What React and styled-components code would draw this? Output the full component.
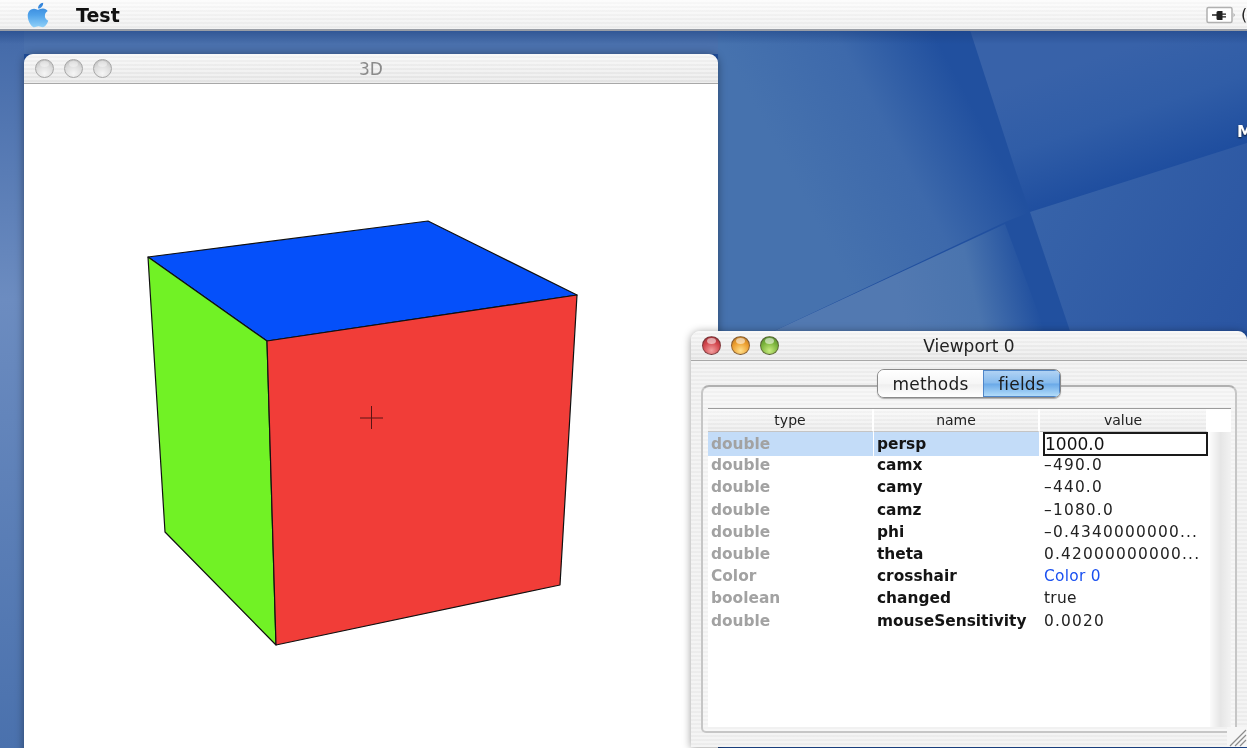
import React from 'react';
import styled, { createGlobalStyle } from 'styled-components';

const GlobalStyle = createGlobalStyle`
  html, body {
    margin: 0;
    padding: 0;
    overflow: hidden;
    background: #2a57a3;
  }
`;

const stripes = `repeating-linear-gradient(180deg, rgba(255,255,255,0.4) 0 2px, rgba(232,232,232,0.12) 2px 4px)`;

const Desktop = styled.div`
  position: relative;
  width: 1247px;
  height: 748px;
  overflow: hidden;
  font-family: "DejaVu Sans", "Liberation Sans", sans-serif;
  filter: blur(0.5px);
`;

const Wallpaper = styled.svg`
  position: absolute;
  inset: 0;
  width: 1247px;
  height: 748px;
`;

const MenuBar = styled.header`
  position: relative;
  z-index: 3;
  height: 29px;
  display: flex;
  align-items: center;
  padding-left: 26px;
  background: ${stripes}, linear-gradient(180deg, #fafafa, #ebebeb);
  border-bottom: 2px solid #9a9ea6;
`;

const AppleLogo = styled.svg`
  width: 24px;
  height: 28px;
  flex: none;
`;

const AppName = styled.span`
  margin-left: 26px;
  font-weight: 700;
  font-size: 19px;
  color: #111;
`;

const MenuExtras = styled.div`
  margin-left: auto;
  display: flex;
  align-items: center;
  gap: 5px;
  margin-right: -6px;
`;

const Battery = styled.svg`
  width: 30px;
  height: 18px;
`;

const Extra = styled.span`
  font-size: 16px;
  color: #222;
  width: 12px;
  overflow: hidden;
`;

const DesktopLabel = styled.span`
  position: absolute;
  left: 1237px;
  top: 122px;
  font-weight: 700;
  font-size: 16px;
  color: #fff;
  text-shadow: 0 1px 2px rgba(0, 0, 0, 0.8);
`;

const Window = styled.section`
  position: absolute;
  left: ${p => p.$x}px;
  top: ${p => p.$y}px;
  width: ${p => p.$w}px;
  height: ${p => p.$h}px;
  border-radius: 9px 9px 0 0;
  overflow: hidden;
  display: flex;
  flex-direction: column;
  box-shadow: 0 1px 8px rgba(0, 0, 0, 0.4);
`;

const TitleBar = styled.div`
  flex: none;
  position: relative;
  height: 29px;
  display: flex;
  align-items: center;
  gap: 10px;
  padding-left: 11px;
  background: ${stripes}, linear-gradient(180deg, #f4f4f4, #e2e2e2);
  border-bottom: 1px solid #a8a8a8;
`;

const tones = {
  off: 'radial-gradient(circle at 50% 80%, #f6f6f6, #dcdcdc 55%, #b4b4b4 100%)',
  red: 'radial-gradient(circle at 50% 80%, #f2a0a0, #d2454c 55%, #8e2a30 100%)',
  amber: 'radial-gradient(circle at 50% 80%, #ffdf8a, #ec9c2c 55%, #a7702a 100%)',
  green: 'radial-gradient(circle at 50% 80%, #c8ec80, #79b23a 55%, #4e8232 100%)',
};

const Light = styled.span`
  position: relative;
  flex: none;
  width: 19px;
  height: 19px;
  box-sizing: border-box;
  border-radius: 50%;
  border: 1px solid ${p => (p.$tone === 'off' ? '#a6a6a6' : 'rgba(70,50,50,0.55)')};
  background: ${p => tones[p.$tone]};

  &::after {
    content: "";
    position: absolute;
    left: 4px;
    right: 4px;
    top: 1px;
    height: 6px;
    border-radius: 50%;
    background: rgba(255, 255, 255, ${p => (p.$tone === 'off' ? 0.4 : 0.55)});
  }
`;

const WindowTitle = styled.span`
  position: absolute;
  left: 0;
  right: 0;
  top: 5px;
  text-align: center;
  font-size: 17px;
  color: ${p => p.$color};
`;

const Canvas = styled.div`
  flex: 1;
  background: #fff;
`;

const CubeArt = styled.svg`
  display: block;
  width: 694px;
  height: 664px;
`;

const Body = styled.div`
  flex: 1;
  position: relative;
  min-height: 0;
  background: ${stripes}, #ededed;
  padding: 24px 10px 14px 10px;
  display: flex;
  flex-direction: column;
`;

const TabPane = styled.div`
  flex: 1;
  position: relative;
  min-height: 0;
  border: 2px solid #c6c6c6;
  border-top-color: #b0b0b0;
  border-radius: 8px 8px 5px 5px;
  padding: 21px 4px 4px 5px;
  background: rgba(255, 255, 255, 0.25);
  display: flex;
  flex-direction: column;
`;

const Segments = styled.div`
  position: absolute;
  top: -18px;
  left: 174px;
  display: flex;
  height: 27px;
  border: 1px solid #8a8a8a;
  border-radius: 7px;
  overflow: hidden;
  box-shadow: 0 1px 1px rgba(0, 0, 0, 0.3);
`;

const Segment = styled.span`
  display: flex;
  align-items: center;
  justify-content: center;
  width: ${p => p.$w}px;
  font-size: 17px;
  letter-spacing: 0.2px;
  color: #1c1c1c;
  background: ${p =>
    p.$active
      ? 'linear-gradient(180deg, #b4d4f4 0%, #86bbee 48%, #6aa9e8 52%, #b8e0fb 100%)'
      : 'linear-gradient(180deg, #fff 0%, #f6f6f6 50%, #efefef 55%, #fff 100%)'};
  box-shadow: ${p => (p.$active ? 'inset 0 0 0 1px #4f86c8' : 'none')};
`;

const Table = styled.div`
  flex: 1;
  min-height: 0;
  display: flex;
  flex-direction: column;
  background: #fff;
  border-top: 1px solid #9c9c9c;
  position: relative;
`;

const Grid = styled.div`
  display: grid;
  grid-template-columns: 166px 166px 168px 1fr;
  height: ${p => p.$h}px;
  flex: none;
`;

const HeaderCell = styled.div`
  display: flex;
  align-items: center;
  justify-content: center;
  font-size: 14px;
  color: #222;
  border-right: 2px solid #fff;
  background: ${stripes}, linear-gradient(180deg, #f6f6f6, #e6e6e6);
  border-bottom: 1px solid #c4c4c4;
`;

const Cell = styled.div`
  display: flex;
  align-items: center;
  padding-left: ${p => p.$pad}px;
  white-space: nowrap;
  overflow: hidden;
  font-size: 15.4px;
  margin-right: 1px;
  background: ${p => (p.$selected ? '#c3dcf8' : 'transparent')};
`;

const TypeCell = styled(Cell)`
  font-weight: 700;
  color: #a2a2a2;
`;

const NameCell = styled(Cell)`
  font-weight: 700;
  color: #141414;
`;

const ValueCell = styled(Cell)`
  color: ${p => (p.$link ? '#1a50f0' : '#222')};
  letter-spacing: ${p => (p.$numeric ? '1.2px' : '0.3px')};
`;

const Editor = styled.div`
  display: flex;
  align-items: center;
  box-sizing: border-box;
  margin-left: 3px;
  border: 2px solid #1a1a1a;
  background: #fff;
  font-size: 17px;
  color: #111;
`;

const Filler = styled.div`
  position: absolute;
  right: 0;
  top: 23px;
  bottom: 0;
  width: 21px;
  background: linear-gradient(90deg, #fbfbfb, #e6e6e6 50%, #f2f2f2);
`;

const Grip = styled.svg`
  position: absolute;
  right: 0;
  bottom: 0;
  width: 20px;
  height: 20px;
`;

const rows = [
  ['double', 'persp', '1000.0'],
  ['double', 'camx', '\u2013490.0'],
  ['double', 'camy', '\u2013440.0'],
  ['double', 'camz', '\u20131080.0'],
  ['double', 'phi', '\u20130.4340000000...'],
  ['double', 'theta', '0.42000000000...'],
  ['Color', 'crosshair', 'Color 0'],
  ['boolean', 'changed', 'true'],
  ['double', 'mouseSensitivity', '0.0020'],
];

const applePath =
  'M318.7 268.7c-.2-36.7 16.4-64.4 50-84.8-18.8-26.9-47.2-41.7-84.7-44.6-35.5-2.8-74.3 20.7-88.5 20.7-15 0-49.4-19.7-76.4-19.7C63.3 141.2 4 184.8 4 273.5q0 39.3 14.4 81.2c12.8 36.7 59 126.7 107.2 125.2 25.2-.6 43-17.9 75.8-17.9 31.8 0 48.3 17.9 76.4 17.9 48.6-.7 90.4-82.5 102.6-119.3-65.2-30.7-61.7-90-61.7-91.9zm-56.6-164.2c27.3-32.4 24.8-61.9 24-72.5-24.1 1.4-52 16.4-67.9 34.9-17.5 19.8-27.8 44.3-25.6 71.9 26.1 2 49.9-11.4 69.5-34.3z';

const Backdrop = () => (
  <Wallpaper viewBox="0 0 1247 748" aria-hidden="true">
    <defs>
      <linearGradient id="left" x1="0" y1="0" x2="0" y2="1">
        <stop offset="0" stopColor="#3f66a6" />
        <stop offset="0.4" stopColor="#6c8cc0" />
        <stop offset="1" stopColor="#4a71ad" />
      </linearGradient>
      <linearGradient id="upperLeft" gradientUnits="userSpaceOnUse" x1="820" y1="230" x2="990" y2="140">
        <stop offset="0" stopColor="#4672ae" />
        <stop offset="0.55" stopColor="#3d69ab" />
        <stop offset="1" stopColor="#21509f" />
      </linearGradient>
      <linearGradient id="lowerLeft" gradientUnits="userSpaceOnUse" x1="900" y1="300" x2="1030" y2="270">
        <stop offset="0" stopColor="#5279b1" />
        <stop offset="0.55" stopColor="#4a74ae" />
        <stop offset="1" stopColor="#21509f" />
      </linearGradient>
      <linearGradient id="upperRight" gradientUnits="userSpaceOnUse" x1="1090" y1="60" x2="1130" y2="180">
        <stop offset="0" stopColor="#3862a9" />
        <stop offset="0.5" stopColor="#305da7" />
        <stop offset="1" stopColor="#1f4e9f" />
      </linearGradient>
      <linearGradient id="lowerRight" gradientUnits="userSpaceOnUse" x1="1030" y1="212" x2="1247" y2="331">
        <stop offset="0" stopColor="#3763a9" />
        <stop offset="1" stopColor="#2a55a2" />
      </linearGradient>
      <linearGradient id="shade" x1="0" y1="0" x2="0" y2="1">
        <stop offset="0" stopColor="#1a3f80" stopOpacity="0.55" />
        <stop offset="1" stopColor="#1a3f80" stopOpacity="0" />
      </linearGradient>
    </defs>
    <rect width="1247" height="748" fill="#21509f" />
    <rect width="24" height="748" fill="url(#left)" />
    <rect x="24" width="700" height="54" fill="#4a70ac" />
    <polygon points="718,30 970,30 1016,172 1030,212 1005,222 774,331 718,331" fill="url(#upperLeft)" />
    <polygon points="774,331 1005,224 1045,331" fill="url(#lowerLeft)" />
    <polygon points="970,30 1247,30 1247,143 1030,212 1016,172" fill="url(#upperRight)" />
    <polygon points="1030,212 1247,143 1247,331 1070,331" fill="url(#lowerRight)" />
    <rect x="0" y="30" width="1247" height="14" fill="url(#shade)" />
  </Wallpaper>
);

const Cube = () => (
  <CubeArt viewBox="24 84 694 664" aria-hidden="true">
    <g stroke="#111" strokeWidth="1.2" strokeLinejoin="round">
      <polygon points="148,257 428,221 577,295 267,341" fill="#0550fa" />
      <polygon points="148,257 267,341 276,645 165,532" fill="#71f225" />
      <polygon points="267,341 577,295 560,585 276,645" fill="#f13d38" />
    </g>
    <path d="M360 418H383M371.500 406V429" stroke="#5a1414" strokeWidth="1" fill="none" />
  </CubeArt>
);

const App = () => (
  <Desktop>
    <GlobalStyle />
    <Backdrop />
    <MenuBar>
      <AppleLogo viewBox="0 0 384 512" aria-hidden="true">
        <defs>
          <linearGradient id="appleFill" x1="0" y1="0" x2="0" y2="1">
            <stop offset="0" stopColor="#2f7fd8" />
            <stop offset="0.5" stopColor="#4fa2ea" />
            <stop offset="1" stopColor="#8fd0f8" />
          </linearGradient>
        </defs>
        <path d={applePath} fill="url(#appleFill)" />
      </AppleLogo>
      <AppName>Test</AppName>
      <MenuExtras>
        <Battery viewBox="0 0 30 18" aria-hidden="true">
          <rect x="1" y="1.500" width="25" height="15" rx="1.500" fill="#fff" stroke="#b0b0b0" strokeWidth="1.500" />
          <path d="M27.500 6.500L29 9L27.500 11.500z" fill="#aaa" />
          <path d="M6 8.300h4.500V6.500q0-1.500 1.500-1.500h4.500v2.500h3.500v1.300h-3.500v1.400h3.500v1.300h-3.500v2.500H12q-1.500 0-1.500-1.500V9.700H6z" fill="#222" />
        </Battery>
        <Extra>(</Extra>
      </MenuExtras>
    </MenuBar>
    <DesktopLabel>M</DesktopLabel>

    <Window $x={24} $y={54} $w={694} $h={720}>
      <TitleBar>
        <Light $tone="off" />
        <Light $tone="off" />
        <Light $tone="off" />
        <WindowTitle $color="#8a8a8a">3D</WindowTitle>
      </TitleBar>
      <Canvas>
        <Cube />
      </Canvas>
    </Window>

    <Window $x={691} $y={331} $w={556} $h={416}>
      <TitleBar>
        <Light $tone="red" />
        <Light $tone="amber" />
        <Light $tone="green" />
        <WindowTitle $color="#222">Viewport 0</WindowTitle>
      </TitleBar>
      <Body>
        <TabPane>
          <Segments>
            <Segment $w={105}>methods</Segment>
            <Segment $w={77} $active>fields</Segment>
          </Segments>
          <Table>
            <Filler />
            <Grid $h={23}>
              <HeaderCell>type</HeaderCell>
              <HeaderCell>name</HeaderCell>
              <HeaderCell>value</HeaderCell>
              <div />
            </Grid>
            {rows.map(([type, name, value], i) => (
              <Grid key={name} $h={22.2}>
                <TypeCell $pad={3} $selected={i === 0}>{type}</TypeCell>
                <NameCell $pad={3} $selected={i === 0}>{name}</NameCell>
                {i === 0 ? (
                  <Editor>{value}</Editor>
                ) : (
                  <ValueCell $pad={4} $link={name === 'crosshair'} $numeric={/\d\./.test(value)}>
                    {value}
                  </ValueCell>
                )}
              </Grid>
            ))}
          </Table>
        </TabPane>
        <Grip viewBox="0 0 20 20" aria-hidden="true">
          <rect width="20" height="20" fill="#f6f6f6" />
          <path d="M3 19L19 3M8 19L19 8M13 19L19 13" stroke="#8c8c8c" strokeWidth="1.200" />
        </Grip>
      </Body>
    </Window>
  </Desktop>
);

export default App;
